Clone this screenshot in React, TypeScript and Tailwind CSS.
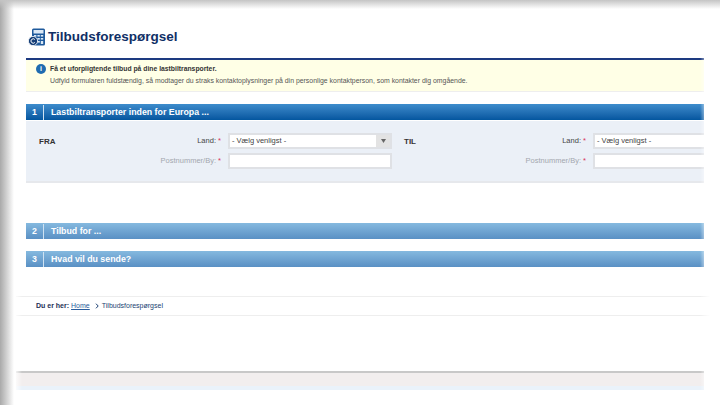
import React from 'react';

function CalcIcon() {
  return (
    <svg width="18" height="18" viewBox="0 0 18 18" className="shrink-0">
      <rect x="4" y="0.5" width="13" height="17" rx="1.5" fill="#1f5a9c" />
      <rect x="5.5" y="2" width="10" height="3.5" fill="#dbe8f5" />
      <g fill="#dbe8f5">
        <rect x="6" y="7" width="2.4" height="1.6" />
        <rect x="9.4" y="7" width="2.4" height="1.6" />
        <rect x="12.8" y="7" width="2.4" height="1.6" />
        <rect x="9.4" y="10" width="2.4" height="1.6" />
        <rect x="12.8" y="10" width="2.4" height="1.6" />
        <rect x="9.4" y="13" width="2.4" height="1.6" />
        <rect x="12.8" y="13" width="2.4" height="3" />
      </g>
      <circle cx="5" cy="13" r="4.6" fill="#163f78" stroke="#fff" strokeWidth="0.8" />
      <path d="M6.8 11.5a2.2 2.2 0 1 0 0 3" fill="none" stroke="#fff" strokeWidth="1" />
    </svg>
  );
}

function SectionBar({ num, title, active }: { num: string; title: string; active?: boolean }) {
  return (
    <div
      className={
        'flex h-4 items-stretch pt-px text-[8.8px] font-bold text-white ' +
        (active
          ? 'bg-gradient-to-b from-[#3d8ccc] to-[#03569f]'
          : 'bg-gradient-to-b from-[#85b9df] to-[#5a90c4]')
      }
    >
      <div className="flex w-[18px] items-center justify-center border-r border-[#cfe2f2]">{num}</div>
      <div className="flex items-center pl-[7px]">{title}</div>
    </div>
  );
}

function Field({ label, required, dim, select }: { label: string; required?: boolean; dim?: boolean; select?: boolean }) {
  return (
    <div className="flex items-center">
      <div className={'w-[112px] shrink-0 text-right text-[7.5px] ' + (dim ? 'text-[#a3a7ae]' : 'text-[#444]')}>
        {label} {required && <span className="text-[#d9345a]">*</span>}
      </div>
      <div className="ml-[7px] flex h-4 w-[164px] shrink-0 items-center border-2 border-[#dfe1e5] bg-white text-[7.5px] text-[#444]">
        {select && <div className="flex-1 pl-[2px]">- Vælg venligst -</div>}
        {select && (
          <div className="flex h-full w-[14px] items-center justify-center bg-[#e3e3e3] text-[#555]">
            <svg width="5" height="4" viewBox="0 0 5 4"><path d="M0 0h5L2.5 4z" fill="#666" /></svg>
          </div>
        )}
      </div>
    </div>
  );
}

function Side({ name }: { name: string }) {
  return (
    <div className="flex w-[365px] shrink-0">
      <div className="w-[70px] shrink-0 pt-[3px] text-[8px] font-bold text-[#333]">{name}</div>
      <div className="flex flex-col gap-1">
        <Field label="Land:" required select />
        <Field label="Postnummer/By:" required dim />
      </div>
    </div>
  );
}

export default function App() {
  return (
    <div className="relative h-[405px] w-[720px] overflow-hidden bg-white font-['Liberation_Sans',Arial,sans-serif]">
      <div className="flex h-full flex-col">
        <div className="mx-[26px] mr-4 flex flex-col">
          {/* Heading */}
          <div className="mt-7 flex h-[18px] items-center gap-[2px] pl-[2px]">
            <CalcIcon />
            <h1 className="text-[13.5px] font-bold text-[#0f2f66]">Tilbudsforespørgsel</h1>
          </div>

          {/* Notice */}
          <div className="mt-3 h-[34px] border-t-2 border-[#1d3a80] border-b border-b-[#eeeeee] bg-[#ffffe6] pl-[10px] pt-[3px]">
            <div className="flex gap-1">
              <div className="mt-[1px] flex h-[10px] w-[10px] items-center justify-center rounded-full bg-[#1f6cb0] text-[7px] font-bold text-white">i</div>
              <div>
                <div className="text-[6.8px] font-bold leading-[11px] text-[#333]">Få et uforpligtende tilbud på dine lastbiltransporter.</div>
                <div className="mt-[1px] text-[6.9px] leading-[11px] text-[#555]">
                  Udfyld formularen fuldstændig, så modtager du straks kontaktoplysninger på din personlige kontaktperson, som kontakter dig omgående.
                </div>
              </div>
            </div>
          </div>

          {/* Step 1 */}
          <div className="mt-3">
            <SectionBar num="1" title="Lastbiltransporter inden for Europa ..." active />
            <div className="mt-[1px] flex h-[62px] overflow-hidden border-b-2 border-[#e6e8ec] bg-[#ebf0f7] pl-[13px] pt-3">
              <Side name="FRA" />
              <Side name="TIL" />
            </div>
          </div>

          {/* Steps 2 and 3 */}
          <div className="mt-10">
            <SectionBar num="2" title="Tilbud for ..." />
          </div>
          <div className="mt-3">
            <SectionBar num="3" title="Hvad vil du sende?" />
          </div>
        </div>

        {/* Breadcrumb */}
        <div className="ml-4 mt-[29px] flex h-5 items-center border-y border-[#eeeeee] pl-5 text-[7px] text-[#1b3f73]">
          <span className="font-bold text-[#1d2f55]">Du er her:</span>
          <span className="ml-[2px] text-[#2b5d9c] underline">Home</span>
          <svg width="4" height="6" viewBox="0 0 4 6" className="ml-[5px] mr-[3px]">
            <path d="M1 .7 3.2 3 1 5.3" fill="none" stroke="#1b3f73" strokeWidth="1" />
          </svg>
          <span>Tilbudsforespørgsel</span>
        </div>

        {/* Footer band */}
        <div className="ml-4 mr-4 mt-[55px] h-[15px] border-t-2 border-[#c8c8c8] bg-[#f2eeee]" />
        <div className="ml-4 mr-4 h-1 bg-[#eaf2fa]" />
      </div>

      {/* Paper edge shading over the page */}
      <div className="pointer-events-none absolute inset-y-0 right-0 w-[20px] bg-gradient-to-r from-white/0 via-white to-white" />
      <div className="pointer-events-none absolute inset-y-0 left-[14px] w-[8px] bg-gradient-to-r from-white to-white/0" />
      <div className="pointer-events-none absolute inset-y-0 left-0 w-[14px] bg-gradient-to-r from-[#a9a9a9] to-white" />
      <div className="pointer-events-none absolute inset-x-0 top-0 h-[9px] bg-gradient-to-b from-[#c4c4c4] to-white/0" />
    </div>
  );
}
